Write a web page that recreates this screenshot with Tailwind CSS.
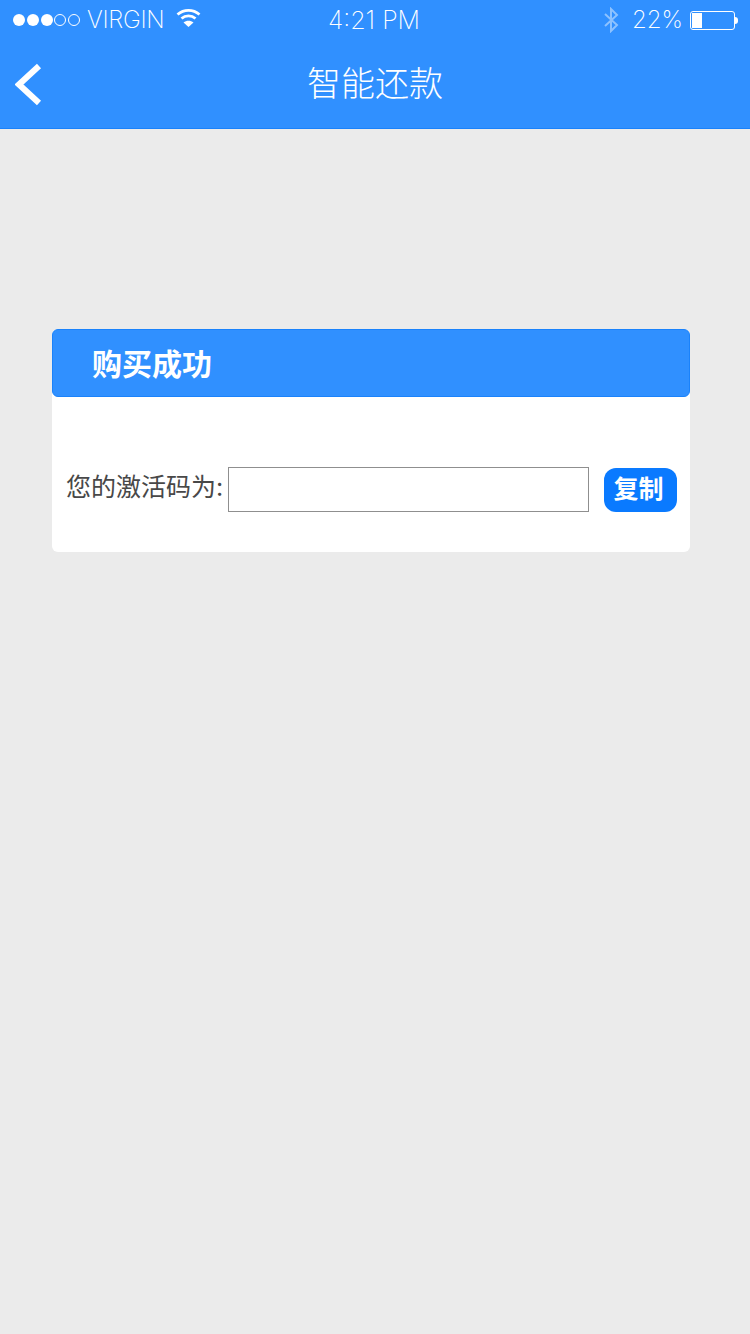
<!DOCTYPE html>
<html lang="zh">
  <head>
    <meta charset="UTF-8" />
    <meta name="viewport" content="width=device-width, initial-scale=1.0" />
    <title>智能还款</title>
    <script src="https://cdn.jsdelivr.net/npm/@tailwindcss/browser@4"></script>
  </head>
  <body class="bg-[#ebebeb] font-['Inter','Noto_Sans_CJK_SC',sans-serif]">
    <div class="h-[1334px] w-[750px] overflow-hidden">
      <!-- header -->
      <div class="h-[129px] bg-[#3090ff] border-b border-[#1a82fb] text-white">
        <!-- status bar -->
        <div class="flex h-10 items-center justify-between pl-[13px] pr-[12px] text-[24px] font-extralight">
          <div class="flex w-[257px] items-center">
            <div class="flex gap-[1.75px]">
              <span class="size-[12px] rounded-full bg-white"></span>
              <span class="size-[12px] rounded-full bg-white"></span>
              <span class="size-[12px] rounded-full bg-white"></span>
              <span class="size-[12px] rounded-full border border-white"></span>
              <span class="size-[12px] rounded-full border border-white"></span>
            </div>
            <span class="ml-[7px] leading-none tracking-[-0.3px]">VIRGIN</span>
            <svg class="ml-[12px] mb-1" width="25" height="20" viewBox="0 0 25 20" fill="none" stroke="white" stroke-width="2.8">
              <path d="M1.5 6.5C8 1 17 1 23.5 6.5" />
              <path d="M5.5 10.5C9.5 7 15.5 7 19.5 10.5" />
              <path d="M7.5 14.5L12.5 19L17.5 14.5C14.5 12.3 10.5 12.3 7.5 14.5Z" fill="white" stroke="none" />
            </svg>
          </div>
          <span class="text-[25px] leading-none">4:21 PM</span>
          <div class="flex w-[260px] items-center justify-end">
            <svg class="mr-[13px]" width="16" height="26" viewBox="0 0 16 26" fill="none" stroke="white" stroke-opacity="0.45" stroke-width="2">
              <path d="M2 7L14 18L8 24V2L14 8L2 19" />
            </svg>
            <span class="leading-none">22%</span>
            <div class="ml-[7px] flex items-center">
              <div class="h-[19px] w-[45px] rounded-[3px] border border-white p-[1px]">
                <div class="h-full w-[10px] bg-white"></div>
              </div>
              <div class="h-[7px] w-[3px] rounded-r-full bg-white"></div>
            </div>
          </div>
        </div>
        <!-- nav -->
        <div class="relative flex h-[88px] items-center justify-center">
          <svg class="absolute left-[15px] top-[23px]" width="27" height="43" viewBox="0 0 27 43" fill="none" stroke="white" stroke-width="6">
            <path d="M24 3L4 21.5L24 40" />
          </svg>
          <span class="text-[34px] font-light leading-none">智能还款</span>
        </div>
      </div>

      <!-- card -->
      <div class="ml-[52px] mt-[200px] h-[223px] w-[638px] rounded-[6px] bg-white">
        <div class="flex h-[68px] items-center rounded-[6px] border border-[#1a82fb] bg-[#3090ff] pl-[39px] pt-[2px] text-[30px] font-bold text-white">
          购买成功
        </div>
        <div class="mt-[70px] flex items-center pl-[14px]">
          <span class="mb-1 w-[162px] whitespace-nowrap text-[25px] font-normal leading-none text-[#484848]">您的激活码为:</span>
          <input type="text" class="h-[45px] w-[361px] border border-[#8f8f8f] bg-white" />
          <button class="ml-[15px] h-11 w-[73px] rounded-[12px] bg-[#0a7aff] pr-[4px] text-[25px] font-bold text-white">复制</button>
        </div>
      </div>
    </div>
  </body>
</html>
